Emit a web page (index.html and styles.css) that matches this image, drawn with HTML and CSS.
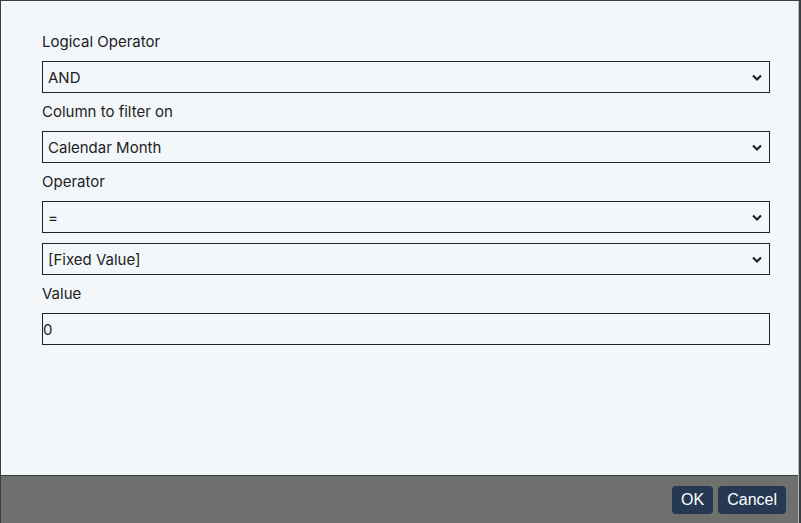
FILE: index.html
```html
<!DOCTYPE html>
<html>
<head>
<meta charset="utf-8">
<link rel="stylesheet" href="styles.css">
</head>
<body>
<div class="modal">
  <div class="modal-body">
    <div class="field">
      <label class="label">Logical Operator</label>
      <div class="select-wrap">
        <select class="select"><option>AND</option></select>
        <svg class="chev" viewBox="0 0 10 8" width="10" height="8"><path d="M1 1.5 L5 5.5 L9 1.5" fill="none" stroke="#222" stroke-width="2.2"/></svg>
      </div>
    </div>
    <div class="field">
      <label class="label">Column to filter on</label>
      <div class="select-wrap">
        <select class="select"><option>Calendar Month</option></select>
        <svg class="chev" viewBox="0 0 10 8" width="10" height="8"><path d="M1 1.5 L5 5.5 L9 1.5" fill="none" stroke="#222" stroke-width="2.2"/></svg>
      </div>
    </div>
    <div class="field">
      <label class="label">Operator</label>
      <div class="select-wrap">
        <select class="select"><option>=</option></select>
        <svg class="chev" viewBox="0 0 10 8" width="10" height="8"><path d="M1 1.5 L5 5.5 L9 1.5" fill="none" stroke="#222" stroke-width="2.2"/></svg>
      </div>
      <div class="select-wrap spaced">
        <select class="select"><option>[Fixed Value]</option></select>
        <svg class="chev" viewBox="0 0 10 8" width="10" height="8"><path d="M1 1.5 L5 5.5 L9 1.5" fill="none" stroke="#222" stroke-width="2.2"/></svg>
      </div>
    </div>
    <div class="field">
      <label class="label">Value</label>
      <input class="input" type="text" value="0">
    </div>
  </div>
  <div class="modal-footer">
    <button class="btn">OK</button>
    <button class="btn">Cancel</button>
  </div>
</div>
</body>
</html>
```

FILE: styles.css
```css
html, body {
  margin: 0;
  padding: 0;
}
body {
  background: #3b3e41;
  width: 801px;
  height: 523px;
  overflow: hidden;
  font-family: Inter, "Noto Sans", sans-serif;
  color: #222;
}
.modal {
  margin: 1px 0 0 1px;
  width: 797px;
  height: 522px;
  border-right: 1px solid #b9bcbf;
  background: #f3f7fa;
  display: flex;
  flex-direction: column;
}
.modal-body {
  flex: 1;
  padding: 31px 28px 0 41px;
  display: flex;
  flex-direction: column;
  gap: 9px;
}
.field {
  display: flex;
  flex-direction: column;
}
.label {
  font-size: 15px;
  line-height: 20px;
  margin-bottom: 9px;
  color: #222;
}
.select-wrap {
  position: relative;
  height: 32px;
}
.select-wrap.spaced {
  margin-top: 10px;
}
.select {
  appearance: none;
  -webkit-appearance: none;
  width: 100%;
  height: 32px;
  box-sizing: border-box;
  border: 1px solid #222;
  border-radius: 0;
  background: #f3f7fa;
  font-family: Inter, "Noto Sans", sans-serif;
  font-size: 15px;
  color: #222;
  padding: 0 5px;
  margin: 0;
}
.chev {
  position: absolute;
  right: 8px;
  top: 13px;
}
.input {
  width: 100%;
  height: 32px;
  box-sizing: border-box;
  border: 1px solid #222;
  border-radius: 0;
  background: #f3f7fa;
  font-family: Inter, "Noto Sans", sans-serif;
  font-size: 15px;
  color: #222;
  padding: 0;
  margin: 0;
}
.modal-footer {
  height: 47px;
  border-top: 1px solid #3a3d3f;
  background: #6e706e;
  display: flex;
  justify-content: flex-end;
  align-items: center;
  gap: 5px;
  padding-right: 12px;
}
.btn {
  height: 28px;
  padding: 0 9px;
  border: none;
  border-radius: 4px;
  background: #253a52;
  color: #fff;
  font-family: "Liberation Sans", Arial, sans-serif;
  font-size: 16px;
  margin-top: 1px;
}
```
